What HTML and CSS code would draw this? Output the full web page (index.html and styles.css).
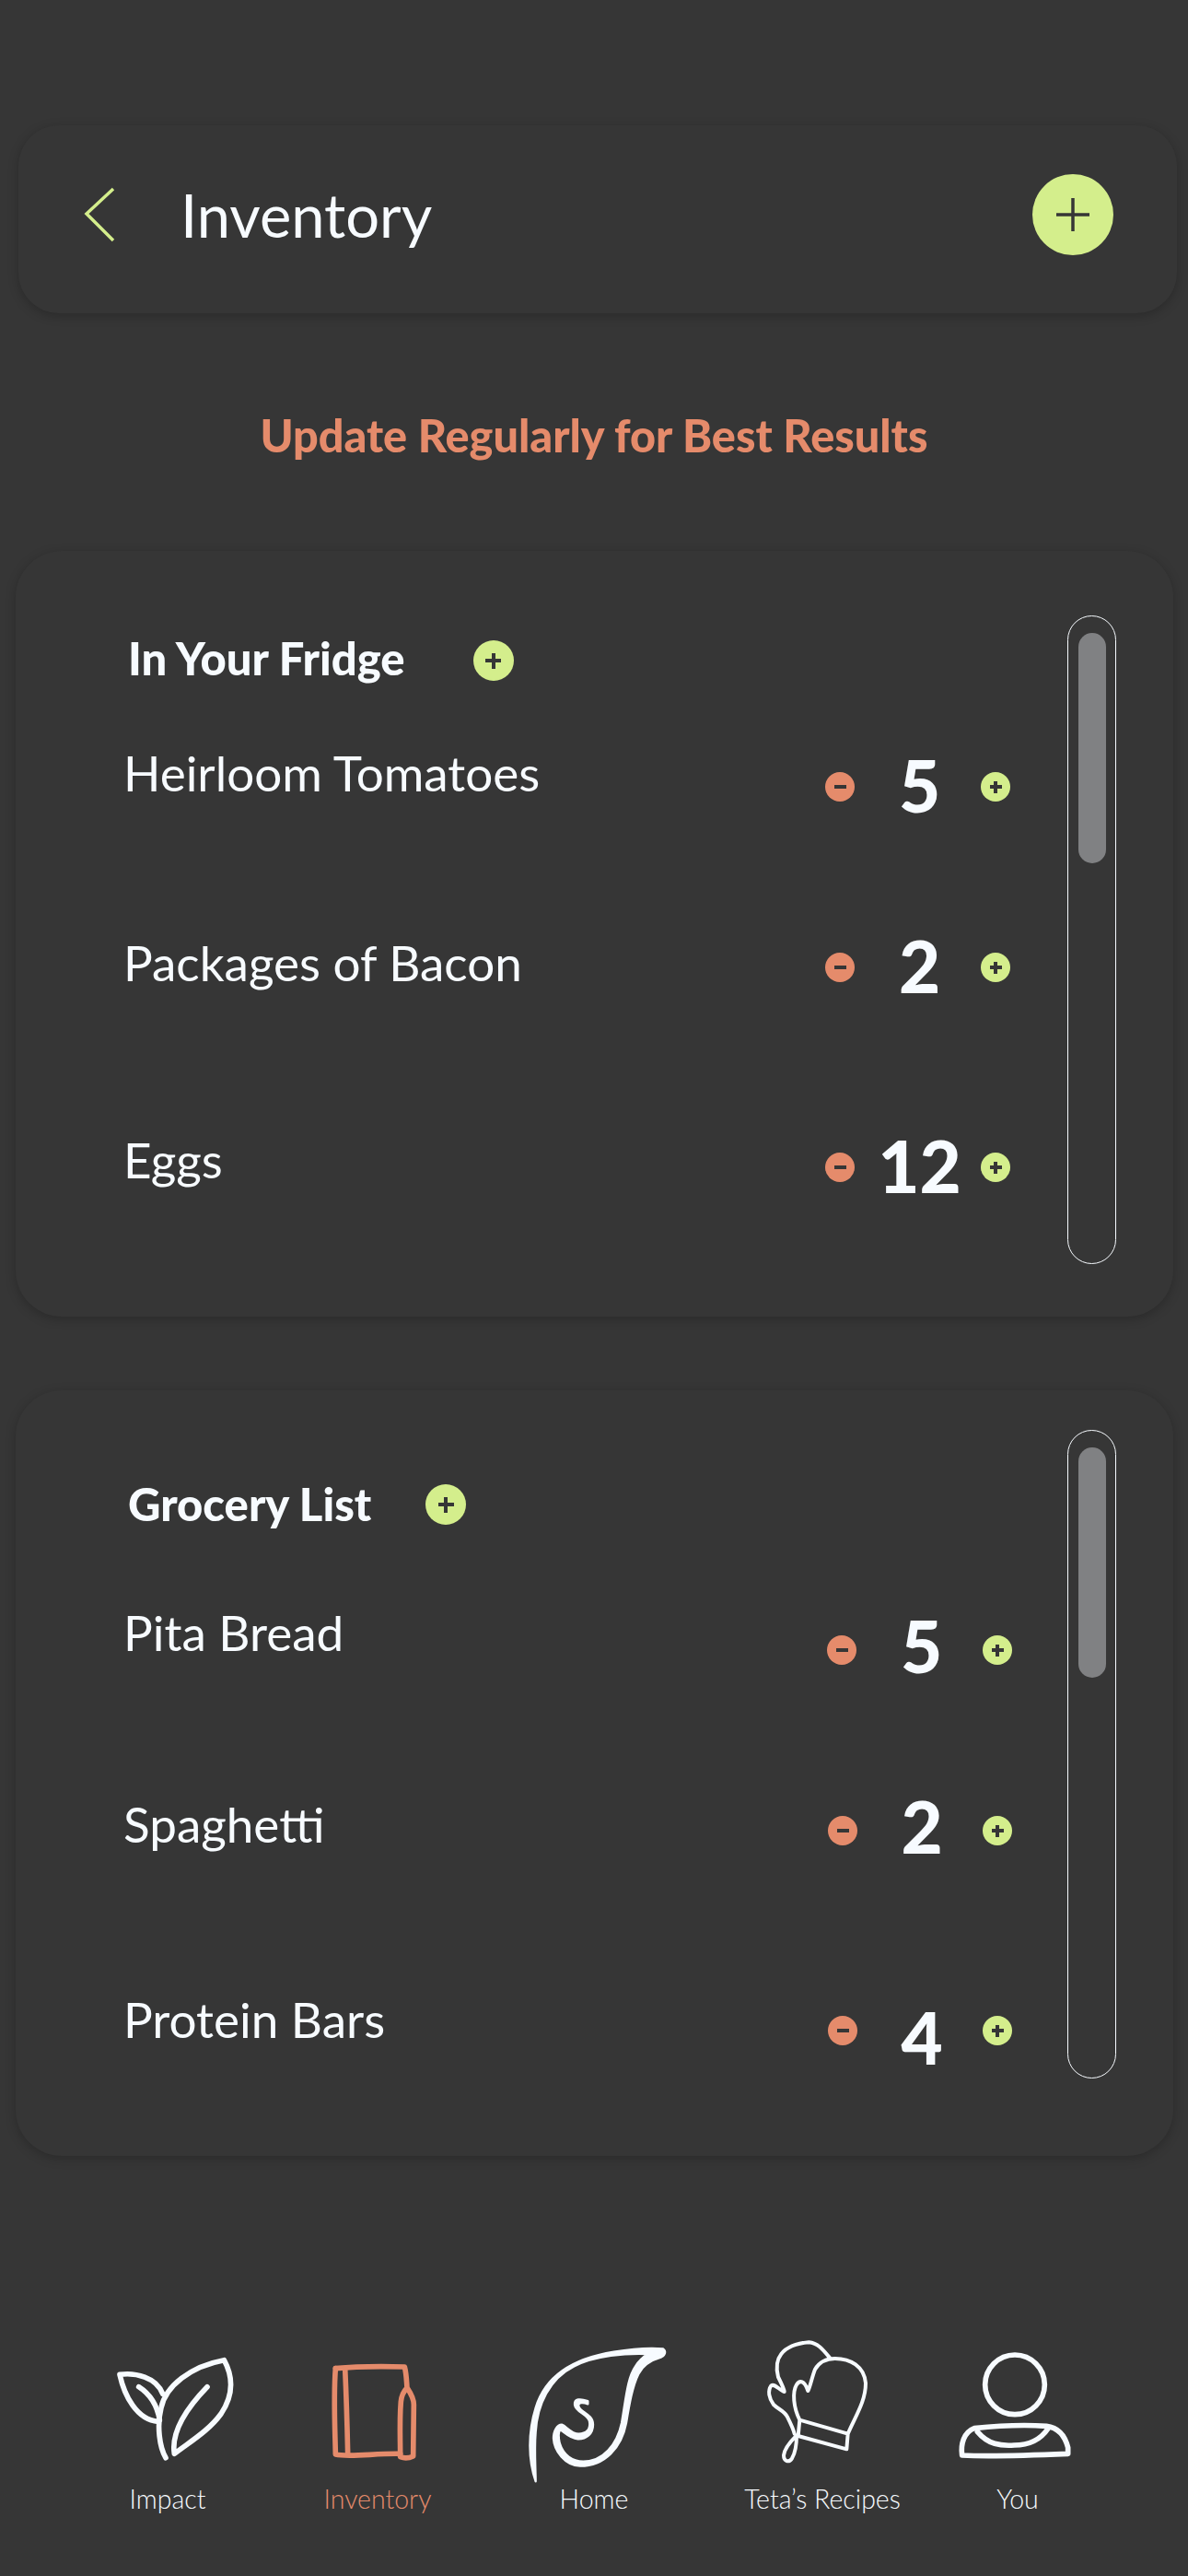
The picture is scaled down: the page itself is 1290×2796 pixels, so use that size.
FILE: index.html
```html
<!DOCTYPE html>
<html>

<head>
  <meta name="viewport" content="width=device-width, initial-scale=1.0" />
  <title>Inventory</title>

  <link rel="stylesheet" href="styles.css">
</head>

<body>
  <div id="mainContent">

    <div class="header">
      <svg class="back" viewBox="0 0 34 60"><path d="M32 2 L3 29 L32 58" /></svg>
      <h1 class="title">Inventory</h1>
      <div class="addBig"><svg viewBox="0 0 88 88"><path d="M44 26 V62 M26 44 H62" /></svg></div>
    </div>

    <p class="notice">Update Regularly for Best Results</p>

    <div class="card fridge">
      <div class="list">
        <div class="listHead">
          <h2>In Your Fridge</h2>
          <span class="dot plus headDot"></span>
        </div>
        <div class="row">
          <span class="name lift15">Heirloom Tomatoes</span>
          <div class="stepper"><span class="dot minus"></span><span class="num">5</span><span class="dot plus"></span></div>
        </div>
        <div class="row">
          <span class="name lift5">Packages of Bacon</span>
          <div class="stepper"><span class="dot minus"></span><span class="num">2</span><span class="dot plus"></span></div>
        </div>
        <div class="row">
          <span class="name lift8">Eggs</span>
          <div class="stepper"><span class="dot minus"></span><span class="num">12</span><span class="dot plus"></span></div>
        </div>
      </div>
      <div class="track"><div class="thumb"></div></div>
    </div>

    <div class="card grocery">
      <div class="list">
        <div class="listHead">
          <h2>Grocery List</h2>
          <span class="dot plus headDot"></span>
        </div>
        <div class="row">
          <span class="name lift19">Pita Bread</span>
          <div class="stepper"><span class="dot minus"></span><span class="num up">5</span><span class="dot plus"></span></div>
        </div>
        <div class="row shifted">
          <span class="name lift5">Spaghetti</span>
          <div class="stepper"><span class="dot minus"></span><span class="num up">2</span><span class="dot plus"></span></div>
        </div>
        <div class="row shifted">
          <span class="name lift12">Protein Bars</span>
          <div class="stepper"><span class="dot minus"></span><span class="num down">4</span><span class="dot plus"></span></div>
        </div>
      </div>
      <div class="track"><div class="thumb"></div></div>
    </div>

    <div class="nav">
      <div class="navItem">
        <svg class="navIcon w150" viewBox="81 150 450 450">
          <path d="M150 232 C200 225 270 240 290 295 M150 232 C165 300 205 380 275 385 M212 272 C240 290 270 320 280 380" />
          <path d="M300 503 C280 470 270 400 285 340 C300 270 380 205 490 185 C520 240 520 300 480 360 C440 415 380 450 328 490 C320 440 340 370 435 272" />
        </svg>
        <span class="navLabel">Impact</span>
      </div>
      <div class="navItem active">
        <svg class="navIcon w100" viewBox="844 150 300 450">
          <path d="M857 212 C930 205 1010 205 1082 207 C1088 230 1088 250 1090 275 C1100 290 1112 310 1112 330 L1110 498 C1095 505 1080 505 1068 500 C1068 440 1065 380 1070 320 C1072 300 1080 285 1090 275" />
          <path d="M857 212 C850 300 855 400 857 492 C900 502 990 488 1068 490 M888 212 C892 300 895 400 897 490" />
        </svg>
        <span class="navLabel">Inventory</span>
      </div>
      <div class="navItem">
        <svg class="navIcon w160" viewBox="75 150 480 450">
          <path class="solid" d="M125 580 C100 510 100 420 125 340 C155 240 240 180 380 158 C440 148 500 145 540 148 C550 155 548 168 535 175 C500 185 475 200 460 230 C440 270 430 330 420 390 C405 470 350 530 270 530 C220 528 185 480 183 440 C183 415 195 395 210 395 C225 400 240 425 265 425 C290 425 305 410 300 385 C295 360 255 355 252 330 C250 310 270 310 295 318 L295 328 C280 322 262 322 265 335 C270 355 312 360 312 395 C312 425 290 443 262 442 C235 440 220 420 205 412 C198 420 200 440 203 455 C215 495 245 515 280 515 C345 515 390 460 405 390 C420 300 425 240 450 205 C462 185 475 175 490 165 C420 162 320 170 250 205 C170 245 130 330 125 420 C120 480 125 540 125 580 Z" />
        </svg>
        <span class="navLabel">Home</span>
      </div>
      <div class="navItem">
        <svg class="navIcon w120" viewBox="879 150 360 450">
          <path class="thin" d="M985 380 C965 340 960 290 975 265 C985 250 1000 250 1012 285 C1020 270 1025 240 1035 215 C1050 190 1075 180 1100 180 C1150 180 1195 205 1200 260 C1200 320 1165 370 1142 425 L1138 475 L980 432 L985 380 L1142 425" />
          <path class="thin" d="M1085 180 C1060 150 1045 130 1015 127 C980 130 945 140 925 165 C905 190 910 220 915 240 C925 260 935 280 935 288 C920 285 905 260 892 268 C880 285 885 310 900 330 C915 345 935 350 945 370 C955 390 965 410 968 425" />
          <path class="thin" d="M975 430 C960 445 935 470 933 495 C933 515 950 520 960 505 C972 485 975 450 975 430" />
        </svg>
        <span class="navLabel">Teta’s Recipes</span>
      </div>
      <div class="navItem">
        <svg class="navIcon w130" viewBox="181 150 390 450">
          <circle cx="367" cy="265" r="97" />
          <path d="M195 495 C190 460 200 420 235 407 C300 400 400 395 470 400 C510 405 530 430 540 470 L540 490 C420 495 300 500 195 495 Z" />
          <path d="M245 418 C280 460 320 465 365 462 C410 462 450 445 475 408" />
        </svg>
        <span class="navLabel">You</span>
      </div>
    </div>

  </div>
</body>

</html>
```

FILE: styles.css
```css
* {
  box-sizing: border-box;
}

body {
  margin: 0;
  background-color: #363636;
  color: #F7FBFF;
  font-family: Lato, "Open Sans", sans-serif;
}

#mainContent {
  width: 1290px;
  height: 2796px;
  padding-top: 136px;
  overflow: hidden;
}

/* top bar */
.header {
  display: flex;
  align-items: center;
  width: 1258px;
  height: 204px;
  margin-left: 20px;
  padding: 0 69px 10px 71px;
  border-radius: 44px;
  background-color: #363636;
  box-shadow: 0 3px 12px rgba(0, 0, 0, .22);
}

.back {
  width: 34px;
  height: 60px;
  margin-right: 71px;
  fill: none;
  stroke: #D4EE8C;
  stroke-width: 3.5;
}

.title {
  flex: 1;
  margin: 0;
  font-size: 65px;
  font-weight: 400;
  line-height: 80px;
}

.addBig {
  width: 88px;
  height: 88px;
  border-radius: 50%;
  background-color: #D4EE8C;
}

.addBig svg {
  display: block;
  fill: none;
  stroke: #363636;
  stroke-width: 3.5;
}

.notice {
  margin: 102px 0 0;
  height: 60px;
  color: #E58B6B;
  font-size: 48.6px;
  font-weight: 900;
  line-height: 60px;
  text-align: center;
}

/* list cards */
.card {
  display: flex;
  align-items: flex-start;
  width: 1257px;
  height: 831px;
  margin-left: 17px;
  padding-left: 117px;
  border-radius: 50px;
  background-color: #363636;
  box-shadow: 0 3px 12px rgba(0, 0, 0, .22);
}

.fridge {
  margin-top: 96px;
}

.grocery {
  margin-top: 80px;
}

.list {
  flex: 1;
}

.listHead {
  display: flex;
  align-items: center;
  height: 44px;
  padding-left: 5px;
}

.listHead h2 {
  margin: 0 0 6px;
  font-size: 49px;
  font-weight: 900;
  line-height: 44px;
}

.grocery .listHead h2 {
  margin-bottom: 3px;
}

.fridge .list {
  padding-top: 97px;
}

.grocery .list {
  padding-top: 102px;
}

.fridge .headDot {
  margin-left: 74px;
}

.grocery .headDot {
  margin-left: 59px;
}

.row {
  display: flex;
  align-items: center;
  height: 100px;
  margin-top: 96px;
  padding-right: 62px;
}

.row:last-child {
  margin-top: 117px;
}

.fridge .listHead + .row {
  margin-top: 65px;
}

.grocery .listHead + .row {
  margin-top: 86px;
}

.grocery .row {
  padding-right: 60px;
}

.name {
  flex: 1;
  font-size: 53px;
  line-height: 60px;
}

.lift5 { margin-bottom: 10px; }
.lift8 { margin-bottom: 16px; }
.lift12 { margin-bottom: 24px; }
.lift15 { margin-bottom: 30px; }
.lift19 { margin-bottom: 38px; }

.shifted .lift5 {
  margin-bottom: 14px;
}

.stepper {
  display: flex;
  align-items: center;
}

.num {
  width: 137px;
  margin-bottom: 4px;
  padding-left: 4px;
  font-size: 78px;
  font-weight: 900;
  line-height: 100px;
  text-align: center;
}

.num.up { margin-bottom: 10px; }
.num.down { margin-top: 14px; margin-bottom: 0; }

.shifted .minus {
  margin-left: 1px;
}

.shifted .num {
  width: 136px;
}

/* round +/- buttons, glyph is drawn with two gradients */
.dot {
  flex: none;
  display: block;
  width: 32px;
  height: 32px;
  border-radius: 50%;
  background-repeat: no-repeat;
  background-position: center;
}

.plus {
  background-color: #D4EE8C;
  background-image: linear-gradient(#363636, #363636), linear-gradient(#363636, #363636);
  background-size: 13px 4px, 4px 13px;
}

.minus {
  background-color: #E58B6B;
  background-image: linear-gradient(#363636, #363636);
  background-size: 13px 4px;
}

.headDot {
  width: 44px;
  height: 44px;
  background-size: 17px 4px, 4px 17px;
}

.track {
  flex: none;
  width: 53px;
  height: 704px;
  margin-right: 62px;
  padding-top: 18px;
  border: 1.5px solid #F7FBFF;
  border-radius: 27px;
}

.fridge .track {
  margin-top: 70px;
}

.grocery .track {
  margin-top: 43px;
}

.thumb {
  width: 30px;
  height: 250px;
  margin: 0 auto;
  border-radius: 15px;
  background-color: #808183;
}

/* bottom nav */
.nav {
  display: grid;
  grid-template-columns: 240px 216px 254px 242px 182px;
  margin-top: 210px;
  padding-left: 62px;
}

.navItem {
  display: flex;
  flex-direction: column;
  align-items: center;
}

.navIcon {
  display: block;
  height: 150px;
  overflow: visible;
  fill: none;
  stroke: #F7FBFF;
  stroke-width: 17;
  stroke-linecap: round;
  stroke-linejoin: round;
}

.w100 { width: 100px; }
.w120 { width: 120px; }
.w130 { width: 130px; }
.w150 { width: 150px; }
.w160 { width: 160px; }

.navIcon .solid {
  fill: #F7FBFF;
  stroke-width: 7;
}

.navIcon .thin {
  stroke-width: 12;
}

.navLabel {
  margin-top: -5px;
  font-size: 28.5px;
  font-weight: 300;
  line-height: 34px;
  white-space: nowrap;
}

.active .navIcon {
  stroke: #E58B6B;
}

.active .navLabel {
  color: #E58B6B;
}
```
